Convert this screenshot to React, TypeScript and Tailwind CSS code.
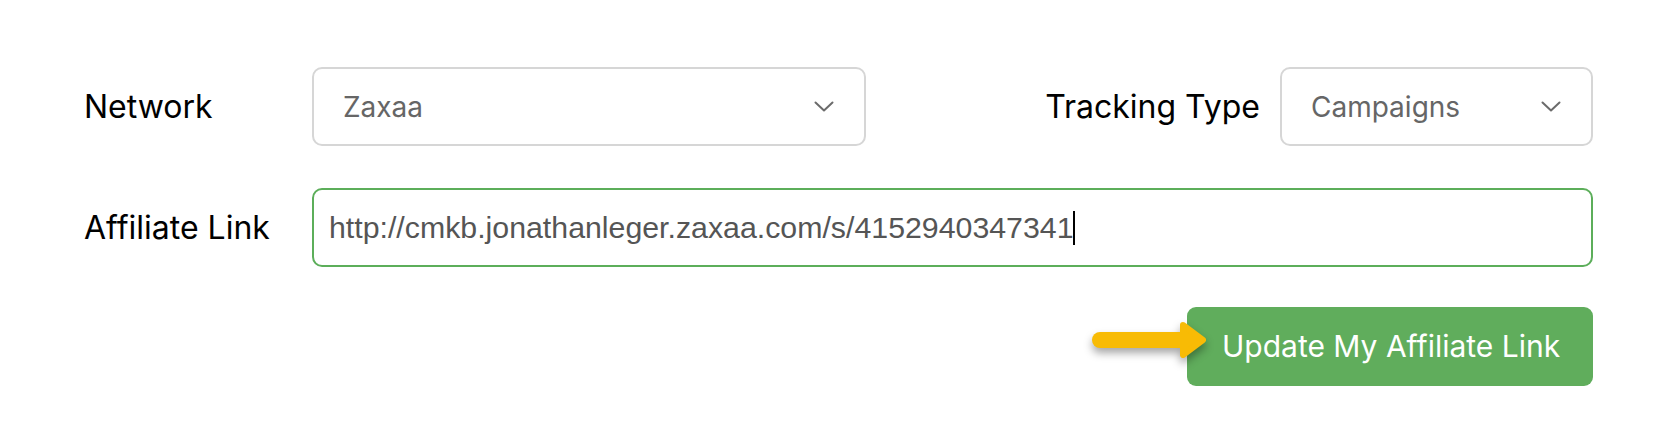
import * as React from "react";

function Chevron() {
  return (
    <svg width="20" height="11" viewBox="0 0 20 11" fill="none" className="shrink-0">
      <polyline points="1.5,1.5 10,9.5 18.5,1.5" stroke="#6b6b6b" strokeWidth="2" strokeLinecap="round" strokeLinejoin="round" />
    </svg>
  );
}

function Select({ value, className }: { value: string; className: string }) {
  return (
    <div className={`${className} h-[79px] rounded-[10px] border-2 border-[#d6d6d6] bg-white flex items-center justify-between pl-[29px] pr-[30px]`}>
      <span className="text-[28px] text-[#666666]">{value}</span>
      <Chevron />
    </div>
  );
}

function Arrow() {
  return (
    <svg
      width="124"
      height="46"
      viewBox="0 0 124 46"
      className="absolute left-[-96px] top-[10px] drop-shadow-[0_5px_4px_rgba(0,0,0,0.35)]"
    >
      <line x1="9" y1="23" x2="96" y2="23" stroke="#f8bb05" strokeWidth="16" strokeLinecap="round" />
      <polygon points="92,8 112,23 92,38" fill="#f8bb05" stroke="#f8bb05" strokeWidth="6" strokeLinejoin="round" />
    </svg>
  );
}

export default function App() {
  return (
    <div className="w-[1670px] h-[446px] bg-white pl-[84px] pr-[77px] pt-[67px] font-['Inter',sans-serif] text-black">
      <div className="flex items-center">
        <div className="w-[228px] text-[32px]">Network</div>
        <Select value="Zaxaa" className="w-[554px]" />
        <div className="flex-1" />
        <div className="text-[32px] mr-[20px]">Tracking Type</div>
        <Select value="Campaigns" className="w-[313px]" />
      </div>

      <div className="flex items-center mt-[42px]">
        <div className="w-[228px] text-[32px]">Affiliate Link</div>
        <div className="flex-1 h-[79px] rounded-[10px] border-2 border-[#5cae5a] flex items-center pl-[15px]">
          <span className="font-['Liberation_Sans',sans-serif] text-[30.3px] text-[#555555]">
            http://cmkb.jonathanleger.zaxaa.com/s/4152940347341
          </span>
          <span className="w-[1.5px] h-[34px] bg-black" />
        </div>
      </div>

      <div className="flex justify-end mt-[40px]">
        <div className="relative">
          <button className="w-[406px] h-[79px] rounded-[9px] bg-[#60ad5c] text-white text-[30px] flex items-center pl-[35px]">
            Update My Affiliate Link
          </button>
          <Arrow />
        </div>
      </div>
    </div>
  );
}
